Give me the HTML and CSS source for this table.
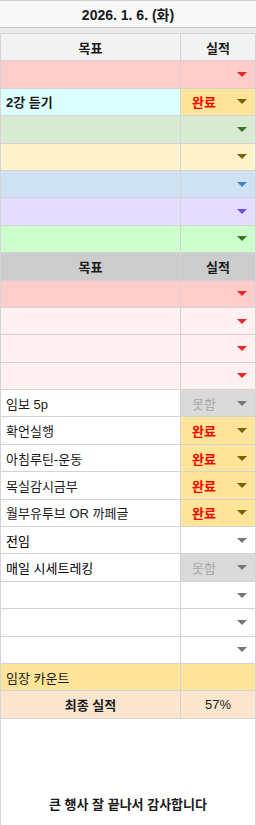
FILE: index.html
```html
<!DOCTYPE html>
<html lang="ko">
<head>
<meta charset="utf-8">
<link rel="stylesheet" href="styles.css">
</head>
<body>
<div class="sheet">
  <div class="title">2026. 1. 6. (화)</div>
  <div class="gap"></div>
  <div class="grid">
    <div class="c hd">목표</div><div class="c hd">실적</div>

    <div class="c pink"></div><div class="c pink dd"><span></span><i class="ar red"></i></div>
    <div class="c cyan b">2강 듣기</div><div class="c gold dd"><span class="done">완료</span><i class="ar brown"></i></div>
    <div class="c green"></div><div class="c green dd"><span></span><i class="ar dgreen"></i></div>
    <div class="c yellow"></div><div class="c yellow dd"><span></span><i class="ar brown"></i></div>
    <div class="c blue"></div><div class="c blue dd"><span></span><i class="ar blu"></i></div>
    <div class="c purple"></div><div class="c purple dd"><span></span><i class="ar purp"></i></div>
    <div class="c lgreen"></div><div class="c lgreen dd"><span></span><i class="ar dgreen"></i></div>

    <div class="c hd2">목표</div><div class="c hd2">실적</div>

    <div class="c pink"></div><div class="c pink dd"><span></span><i class="ar red"></i></div>
    <div class="c lpink"></div><div class="c lpink dd"><span></span><i class="ar red"></i></div>
    <div class="c lpink"></div><div class="c lpink dd"><span></span><i class="ar red"></i></div>
    <div class="c lpink"></div><div class="c lpink dd"><span></span><i class="ar red"></i></div>

    <div class="c">임보 5p</div><div class="c grey dd"><span class="fail">못함</span><i class="ar gr"></i></div>
    <div class="c">확언실행</div><div class="c gold dd"><span class="done">완료</span><i class="ar brown"></i></div>
    <div class="c">아침루틴-운동</div><div class="c gold dd"><span class="done">완료</span><i class="ar brown"></i></div>
    <div class="c">목실감시금부</div><div class="c gold dd"><span class="done">완료</span><i class="ar brown"></i></div>
    <div class="c">월부유투브 OR 까페글</div><div class="c gold dd"><span class="done">완료</span><i class="ar brown"></i></div>
    <div class="c dark">전임</div><div class="c dd"><span></span><i class="ar gr"></i></div>
    <div class="c dark">매일 시세트레킹</div><div class="c grey dd"><span class="fail">못함</span><i class="ar gr"></i></div>
    <div class="c"></div><div class="c dd"><span></span><i class="ar gr"></i></div>
    <div class="c"></div><div class="c dd"><span></span><i class="ar gr"></i></div>
    <div class="c"></div><div class="c dd"><span></span><i class="ar gr"></i></div>

    <div class="c gold">임장 카운트</div><div class="c gold"></div>
    <div class="c peach b ctr">최종 실적</div><div class="c peach ctr">57%</div>
  </div>
  <div class="note">큰 행사 잘 끝나서 감사합니다</div>
</div>
</body>
</html>
```

FILE: styles.css
```css
html, body {
  margin: 0;
  padding: 0;
  background: #ffffff;
}

body {
  width: 256px;
  height: 825px;
  overflow: hidden;
  font-family: "Liberation Sans", "Noto Sans CJK KR", sans-serif;
  font-size: 13px;
  color: #1a1a1a;
}

.sheet {
  display: flex;
  flex-direction: column;
  height: 825px;
}

.title {
  box-sizing: border-box;
  height: 28px;
  border-top: 1px solid #d0d0d0;
  border-bottom: 1px solid #c4c4c4;
  background: #f8f8f8;
  display: flex;
  align-items: center;
  justify-content: center;
  font-weight: bold;
  font-size: 14px;
}

.gap {
  height: 5px;
  background: #ececec;
}

.grid {
  display: grid;
  grid-template-columns: 179px 1fr;
  grid-auto-rows: 26.4px;
  gap: 1px;
  background: #d4d4d4;
  padding: 1px 1px 1px 1px;
}

.c {
  background: #ffffff;
  display: flex;
  align-items: center;
  padding-left: 5px;
  white-space: nowrap;
  overflow: hidden;
}

.b { font-weight: bold; }

.dark { color: #000000; }

.ctr {
  justify-content: center;
  padding-left: 0;
}

.hd {
  background: #f3f3f3;
  font-weight: bold;
  justify-content: center;
  padding-left: 0;
}

.hd2 {
  background: #cccccc;
  font-weight: bold;
  justify-content: center;
  padding-left: 0;
}

.pink { background: #ffcccc; }
.lpink { background: #fff1f1; }
.cyan { background: #dcffff; }
.gold { background: #ffe599; }
.green { background: #d9ead3; }
.yellow { background: #fff2cc; }
.blue { background: #cfe2f3; }
.purple { background: #e5ddff; }
.lgreen { background: #ccffcc; }
.grey { background: #dadada; }
.peach { background: #fce5cd; }

.dd {
  padding-left: 11px;
  padding-right: 8px;
  justify-content: space-between;
}

.done {
  color: #ff0000;
  font-weight: bold;
}

.fail {
  color: #a8a8a8;
}

.ar {
  width: 0;
  height: 0;
  border-left: 5px solid transparent;
  border-right: 5px solid transparent;
  border-top: 5px solid #777777;
}

.ar.red { border-top-color: #e8262a; }
.ar.brown { border-top-color: #7f6000; }
.ar.dgreen { border-top-color: #38761d; }
.ar.blu { border-top-color: #3d85c6; }
.ar.purp { border-top-color: #6a4cf0; }
.ar.gr { border-top-color: #757575; }

.note {
  flex: 1;
  border-left: 1px solid #d4d4d4;
  border-right: 1px solid #d4d4d4;
  display: flex;
  align-items: flex-end;
  justify-content: center;
  padding-bottom: 12px;
  font-weight: bold;
}
```
